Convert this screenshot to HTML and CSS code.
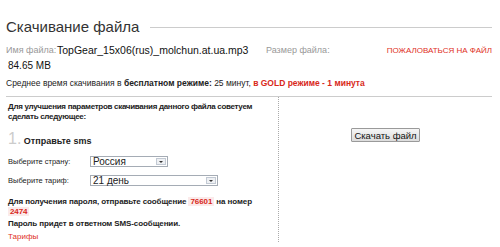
FILE: index.html
```html
<!DOCTYPE html>
<html lang="ru">
<head>
    <meta charset="UTF-8">
    <title>Скачивание файла</title>
    <link rel="stylesheet" href="styles.css">
</head>
<body>
    <div class="page">
        <h1 class="title"><span>Скачивание файла</span></h1>

        <div class="file-row">
            <span class="label">Имя файла:</span>
            <span class="file-name">TopGear_15x06(rus)_molchun.at.ua.mp3</span>
            <span class="label size-label">Размер файла:</span>
            <a class="complain" href="#">ПОЖАЛОВАТЬСЯ НА ФАЙЛ</a>
        </div>
        <div class="file-size">84.65 MB</div>

        <div class="time">Среднее время скачивания в <b>бесплатном режиме:</b> 25 минут, <span class="gold">в GOLD режиме - 1 минута</span></div>

        <div class="cols">
            <div class="sms">
                <p class="intro">Для улучшения параметров скачивания данного файла советуем<br>сделать следующее:</p>
                <div class="step"><span class="num">1.</span> Отправьте sms</div>
                <div class="field">
                    <label class="field-label">Выберите страну:</label>
                    <div class="select short"><span>Россия</span><i class="arrow"></i></div>
                </div>
                <div class="field second">
                    <label class="field-label">Выберите тариф:</label>
                    <div class="select long"><span>21 день</span><i class="arrow"></i></div>
                </div>
                <p class="send">Для получения пароля, отправьте сообщение <span class="code">76601</span> на номер<br><span class="code">2474</span></p>
                <p class="send reply">Пароль придет в ответном SMS-сообщении.</p>
                <a class="tariffs" href="#">Тарифы</a>
            </div>
            <div class="download">
                <button class="btn">Скачать файл</button>
            </div>
        </div>
    </div>
</body>
</html>
```

FILE: styles.css
```css
* {
    margin: 0;
    padding: 0;
    box-sizing: border-box;
}

body {
    background: #fff;
    font-family: 'Liberation Sans', Arial, sans-serif;
    font-size: 9px;
    color: #222;
    overflow: hidden;
}

.page {
    padding: 0 8px 0 6px;
}

.title {
    display: flex;
    align-items: center;
    gap: 11px;
    margin-top: 17px;
    line-height: 20px;
    font-weight: normal;
    font-size: 15px;
    color: #333;
}

.title::after {
    content: "";
    flex: 1;
    border-top: 1px solid #ccc;
}

.file-row {
    display: flex;
    align-items: center;
    height: 12px;
    margin-top: 7px;
    white-space: nowrap;
}

.label {
    color: #999;
    font-size: 9px;
    width: 51px;
}

.file-name {
    font-size: 10.5px;
    color: #111;
    width: 209px;
}

.size-label {
    width: 120px;
}

.complain {
    margin-left: auto;
    color: #e0301e;
    font-size: 8px;
    text-decoration: none;
}

.file-size {
    margin: 4px 0 0 2px;
    line-height: 12px;
    font-size: 10px;
    color: #111;
}

.time {
    margin-top: 5px;
    line-height: 12px;
    font-size: 8.5px;
    padding-bottom: 7px;
    border-bottom: 1px solid #ccc;
    white-space: nowrap;
}

.gold {
    color: #d8281a;
    font-weight: bold;
}

.cols {
    display: flex;
}

.sms {
    width: 273px;
    padding: 5px 0 0 2px;
    border-right: 1px dotted #aaa;
}

.intro {
    font-weight: bold;
    font-size: 8px;
    letter-spacing: -0.3px;
    line-height: 10px;
    white-space: nowrap;
}

.step {
    margin-top: 9px;
    line-height: 16px;
    font-weight: bold;
    font-size: 9px;
}

.num {
    font-size: 16px;
    font-weight: normal;
    color: #ccc;
}

.field {
    display: flex;
    align-items: center;
    height: 11px;
    margin-top: 7px;
}

.field.second {
    margin-top: 8px;
}

.field-label {
    width: 82px;
    font-size: 7.5px;
}

.select {
    display: flex;
    align-items: center;
    justify-content: space-between;
    height: 11px;
    border: 1px solid #a5acb5;
    padding: 0 1px 0 2px;
    font-size: 10px;
}

.select.short {
    width: 78px;
}

.select.long {
    width: 128px;
}

.arrow {
    width: 10px;
    height: 7px;
    border: 1px solid #c2c9d3;
    background: #eef0f3;
    position: relative;
}

.arrow::after {
    content: "";
    position: absolute;
    left: 2px;
    top: 2px;
    border-left: 2px solid transparent;
    border-right: 2px solid transparent;
    border-top: 2px solid #333;
}

.send {
    margin-top: 11px;
    font-weight: bold;
    font-size: 8px;
    letter-spacing: -0.1px;
    line-height: 10px;
    white-space: nowrap;
}

.send.reply {
    margin-top: 2px;
}

.code {
    color: #d8281a;
    background: #fbeaea;
    padding: 0 2px;
}

.tariffs {
    display: block;
    margin-top: 3px;
    line-height: 10px;
    color: #e0301e;
    font-size: 8px;
    text-decoration: none;
}

.download {
    flex: 1;
    display: flex;
    justify-content: center;
    align-items: flex-start;
    padding-top: 31px;
}

.btn {
    font-family: 'Liberation Sans', Arial, sans-serif;
    font-size: 9.5px;
    padding: 0 2px;
    height: 14px;
    white-space: nowrap;
    color: #111;
    background: linear-gradient(#f6f6f6, #dcdcdc);
    border: 1px solid #9a9a9a;
    border-radius: 1px;
}
```
